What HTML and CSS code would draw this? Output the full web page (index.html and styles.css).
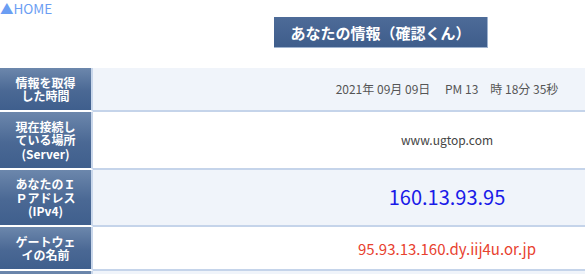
FILE: index.html
```html
<!DOCTYPE html>
<html lang="ja">
<head>
<meta charset="utf-8">
<title>あなたの情報（確認くん）</title>
<link rel="stylesheet" href="styles.css">
</head>
<body>
<div class="page">
  <a class="home" href="#">▲HOME</a>
  <div class="title-wrap">
    <h1 class="title">あなたの情報（確認くん）</h1>
  </div>
  <table class="info">
    <tr class="odd">
      <th>情報を取得<br>した時間</th>
      <td class="date">2021年 09月 09日　 PM 13　時 18分 35秒</td>
    </tr>
    <tr>
      <th>現在接続し<br>ている場所<br>(Server)</th>
      <td class="server">www.ugtop.com</td>
    </tr>
    <tr class="odd">
      <th>あなたのＩ<br>Ｐアドレス<br>(IPv4)</th>
      <td class="ip">160.13.93.95</td>
    </tr>
    <tr>
      <th>ゲートウェ<br>イの名前</th>
      <td class="gw">95.93.13.160.dy.iij4u.or.jp</td>
    </tr>
    <tr class="odd">
      <th class="empty"></th>
      <td class="empty"></td>
    </tr>
  </table>
</div>
</body>
</html>
```
FILE: styles.css
```css
html, body {
  margin: 0;
  padding: 0;
  overflow: hidden;
  background: #ffffff;
  font-family: "Noto Sans CJK JP", "Noto Sans", sans-serif;
}

.page {
  width: 801px;
}

.home {
  display: block;
  height: 17px;
  font-size: 13.5px;
  line-height: 17px;
  color: #6b9ef3;
  text-decoration: none;
}

.title-wrap {
  display: flex;
  padding-left: 274px;
  height: 51px;
}

.title {
  margin: 0;
  width: 214px;
  height: 31px;
  box-sizing: border-box;
  display: flex;
  align-items: center;
  justify-content: center;
  font-size: 15px;
  font-weight: bold;
  color: #ffffff;
  background: linear-gradient(#4d6b98, #3e5d8b);
  border-right: 1px solid #9fb3cf;
  border-bottom: 1px solid #9fb3cf;
}

.info {
  width: 801px;
  border-collapse: separate;
  border-spacing: 0;
}

.info th {
  width: 93px;
  box-sizing: border-box;
  padding: 7.5px 0;
  font-size: 12px;
  line-height: 13.5px;
  font-weight: bold;
  color: #ffffff;
  text-align: center;
  background: linear-gradient(#6c87ac, #4a6894 55%, #3f5f8d);
  border-bottom: 2px solid #ffffff;
  border-right: 2px solid #c9d7eb;
}

.info td {
  text-align: center;
  color: #555555;
  font-size: 12px;
  line-height: 13.5px;
  background: #ffffff;
  border-bottom: 2px solid #c5d4ea;
}

.info tr.odd td {
  background: #f0f4fa;
}

.info .empty {
  height: 42px;
}

.info td.date {
  color: #555555;
}

.info td.server {
  color: #444444;
}

.info td.ip {
  font-size: 20px;
  line-height: 20px;
  color: #1a1ae8;
}

.info td.gw {
  font-size: 15px;
  line-height: 15px;
  color: #e8422f;
}
```
